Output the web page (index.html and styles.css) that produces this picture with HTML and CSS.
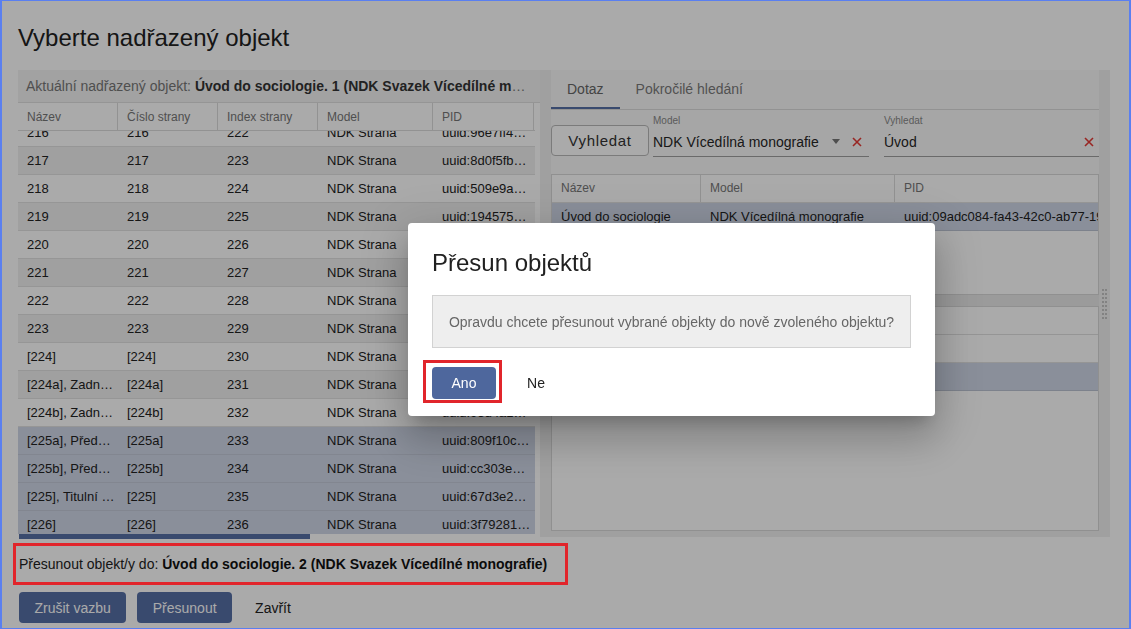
FILE: index.html
```html
<!DOCTYPE html>
<html lang="cs">
<head>
<meta charset="utf-8">
<title>Vyberte nadřazený objekt</title>
<link rel="stylesheet" href="styles.css">
</head>
<body>
<div class="page">
  <h1 class="title">Vyberte nadřazený objekt</h1>
  <div class="panels">
    <section class="left">
      <div class="current">Aktuální nadřazený objekt: <b>Úvod do sociologie. 1 (NDK Svazek Vícedílné monografie)</b></div>
      <div class="grid-wrap">
        <div class="grid-head">
          <div class="hc">Název</div><div class="hc">Číslo strany</div><div class="hc">Index strany</div><div class="hc">Model</div><div class="hc">PID</div><div class="hc">Typ</div>
        </div>
        <div class="grid-body">
          <div class="grid-rows">
            <div class="row"><div class="c">216</div><div class="c">216</div><div class="c">222</div><div class="c">NDK Strana</div><div class="c">uuid:96e7ff4a21</div><div class="c"></div></div>
            <div class="row"><div class="c">217</div><div class="c">217</div><div class="c">223</div><div class="c">NDK Strana</div><div class="c">uuid:8d0f5fb3a1</div><div class="c"></div></div>
            <div class="row"><div class="c">218</div><div class="c">218</div><div class="c">224</div><div class="c">NDK Strana</div><div class="c">uuid:509e9a7c21</div><div class="c"></div></div>
            <div class="row"><div class="c">219</div><div class="c">219</div><div class="c">225</div><div class="c">NDK Strana</div><div class="c">uuid:1945751c2d</div><div class="c"></div></div>
            <div class="row"><div class="c">220</div><div class="c">220</div><div class="c">226</div><div class="c">NDK Strana</div><div class="c">uuid:2a7f10bc4e</div><div class="c"></div></div>
            <div class="row"><div class="c">221</div><div class="c">221</div><div class="c">227</div><div class="c">NDK Strana</div><div class="c">uuid:4c1e92ad7f</div><div class="c"></div></div>
            <div class="row"><div class="c">222</div><div class="c">222</div><div class="c">228</div><div class="c">NDK Strana</div><div class="c">uuid:77b3d0e512</div><div class="c"></div></div>
            <div class="row"><div class="c">223</div><div class="c">223</div><div class="c">229</div><div class="c">NDK Strana</div><div class="c">uuid:e03a5f6b88</div><div class="c"></div></div>
            <div class="row"><div class="c">[224]</div><div class="c">[224]</div><div class="c">230</div><div class="c">NDK Strana</div><div class="c">uuid:b51c7e0d43</div><div class="c"></div></div>
            <div class="row"><div class="c">[224a], Zadní předsádka</div><div class="c">[224a]</div><div class="c">231</div><div class="c">NDK Strana</div><div class="c">uuid:0f9e3c2a61</div><div class="c"></div></div>
            <div class="row"><div class="c">[224b], Zadní předsádka</div><div class="c">[224b]</div><div class="c">232</div><div class="c">NDK Strana</div><div class="c">uuid:93d4a1b7e5</div><div class="c"></div></div>
            <div class="row sel"><div class="c">[225a], Přední desky</div><div class="c">[225a]</div><div class="c">233</div><div class="c">NDK Strana</div><div class="c">uuid:809f10c2ab</div><div class="c"></div></div>
            <div class="row sel"><div class="c">[225b], Přední desky</div><div class="c">[225b]</div><div class="c">234</div><div class="c">NDK Strana</div><div class="c">uuid:cc303e91fa</div><div class="c"></div></div>
            <div class="row sel"><div class="c">[225], Titulní strana</div><div class="c">[225]</div><div class="c">235</div><div class="c">NDK Strana</div><div class="c">uuid:67d3e2a4b0</div><div class="c"></div></div>
            <div class="row sel"><div class="c">[226]</div><div class="c">[226]</div><div class="c">236</div><div class="c">NDK Strana</div><div class="c">uuid:3f79281d6c</div><div class="c"></div></div>
          </div>
        </div>
        <div class="hscroll"><div class="thumb"></div></div>
      </div>
      <div class="vtrack"></div>
    </section>

    <section class="right">
      <div class="inner">
        <div class="tabs">
          <div class="tab active">Dotaz</div>
          <div class="tab">Pokročilé hledání</div>
        </div>
        <div class="search">
          <button class="btn-stroked">Vyhledat</button>
          <div class="field model">
            <label>Model</label>
            <div class="control">
              <span class="value">NDK Vícedílná monografie</span>
              <span class="arrow"></span>
              <svg class="clear" width="10" height="10" viewBox="0 0 10 10"><path d="M1 1L9 9M9 1L1 9" stroke="#e53935" stroke-width="1.6"/></svg>
            </div>
          </div>
          <div class="field query">
            <label>Vyhledat</label>
            <div class="control">
              <span class="value">Úvod</span>
              <svg class="clear" width="10" height="10" viewBox="0 0 10 10"><path d="M1 1L9 9M9 1L1 9" stroke="#e53935" stroke-width="1.6"/></svg>
            </div>
          </div>
        </div>
        <div class="pane top">
          <div class="rt-row rt-head"><div class="hc">Název</div><div class="hc">Model</div><div class="hc">PID</div></div>
          <div class="rt-row sel"><div class="c">Úvod do sociologie</div><div class="c">NDK Vícedílná monografie</div><div class="c clip">uuid:09adc084-fa43-42c0-ab77-19f2c3d4e5a6</div></div>
        </div>
        <div class="splitter"><svg class="grip" width="6" height="30" viewBox="0 0 6 30">
          <g fill="#c4c4c4">
            <rect x="0" y="0" width="2" height="2"/><rect x="3" y="0" width="2" height="2"/>
            <rect x="0" y="4" width="2" height="2"/><rect x="3" y="4" width="2" height="2"/>
            <rect x="0" y="8" width="2" height="2"/><rect x="3" y="8" width="2" height="2"/>
            <rect x="0" y="12" width="2" height="2"/><rect x="3" y="12" width="2" height="2"/>
            <rect x="0" y="16" width="2" height="2"/><rect x="3" y="16" width="2" height="2"/>
            <rect x="0" y="20" width="2" height="2"/><rect x="3" y="20" width="2" height="2"/>
            <rect x="0" y="24" width="2" height="2"/><rect x="3" y="24" width="2" height="2"/>
            <rect x="0" y="28" width="2" height="2"/><rect x="3" y="28" width="2" height="2"/>
          </g></svg></div>
        <div class="pane bottom">
          <div class="rt-row rt-head"><div class="hc">Název</div><div class="hc">Model</div><div class="hc"></div></div>
          <div class="rt-row"><div class="c">Úvod do sociologie. 1</div><div class="c">NDK Svazek</div><div class="c"></div></div>
          <div class="rt-row sel"><div class="c">Úvod do sociologie. 2</div><div class="c">NDK Svazek</div><div class="c"></div></div>
        </div>
      </div>
    </section>
  </div>

  <div class="move-target">Přesunout objekt/y do:&nbsp;<b>Úvod do sociologie. 2 (NDK Svazek Vícedílné monografie)</b></div>

  <div class="actions">
    <button class="btn-flat">Zrušit vazbu</button>
    <button class="btn-flat">Přesunout</button>
    <button class="btn-text">Zavřít</button>
  </div>
</div>

<div class="backdrop"></div>

<div class="dialog">
  <h2 class="dlg-title">Přesun objektů</h2>
  <div class="dlg-msg">Opravdu chcete přesunout vybrané objekty do nově zvoleného objektu?</div>
  <div class="dlg-actions">
    <button class="dlg-yes">Ano</button>
    <button class="dlg-no">Ne</button>
  </div>
</div>

<div class="frame"></div>
</body>
</html>
```

FILE: styles.css
```css
*, *::before, *::after { box-sizing: border-box; }
html, body { margin: 0; padding: 0; }
body {
  font-family: "Liberation Sans", Arial, sans-serif;
  background: #ffffff;
  color: #212121;
  width: 1131px;
  height: 629px;
  overflow: hidden;
}
button { font-family: inherit; cursor: pointer; }

.page { padding: 22px 21px 0 18px; }

.title {
  margin: 0 0 16px;
  font-size: 24px;
  line-height: 32px;
  font-weight: normal;
  color: #212121;
}

.panels { display: flex; height: 469px; align-items: flex-start; }

/* ---------- left panel ---------- */
.left {
  width: 522px;
  height: 469px;
  display: grid;
  grid-template-columns: 517px 5px;
  grid-template-rows: 33px 1fr;
  background: #f1f1f1;
}
.current {
  grid-column: 1 / 3;
  padding: 0 7px 0 8px;
  font-size: 14px;
  line-height: 33px;
  color: #777;
  white-space: nowrap;
  overflow: hidden;
  text-overflow: ellipsis;
  background: #f3f3f3;
  border-bottom: 1px solid #e0e0e0;
}
.current b { color: #333; }
.grid-wrap { display: flex; flex-direction: column; min-height: 0; overflow: hidden; background: #fff; }
.vtrack { background: #ffffff; }

.grid-head, .row {
  display: grid;
  grid-template-columns: 100px 100px 100px 115px 101px 400px;
  width: 916px;
}
.grid-head { height: 28px; flex: none; border-bottom: 1px solid #dcdcdc; background: #fff; }
.hc {
  font-size: 12px;
  color: #777;
  line-height: 28px;
  padding: 0 9px;
  border-right: 1px solid #dcdcdc;
  white-space: nowrap;
  overflow: hidden;
}
.grid-body { flex: 1; overflow: hidden; min-height: 0; }
.grid-rows { margin-top: -12px; }
.row { height: 28px; border-bottom: 1px solid #e2e2e2; background: #fff; }
.row:nth-child(even) { background: #f1f1f1; }
.row.sel { background: #d0d7e8; border-bottom-color: #c3cad9; }
.c {
  font-size: 13px;
  color: #222;
  line-height: 27px;
  padding: 0 2px 0 9px;
  white-space: nowrap;
  overflow: hidden;
  text-overflow: ellipsis;
}
.hscroll { height: 5px; flex: none; background: #fff; padding-left: 1px; }
.thumb { width: 291px; height: 5px; background: #566fa6; }

/* ---------- right panel ---------- */
.right {
  width: 570px;
  height: 467px;
  padding: 0 11px 6px;
  background: #f0f0f0;
  display: flex;
}
.inner { flex: 1; display: flex; flex-direction: column; background: #fafafa; min-width: 0; }
.tabs { height: 40px; flex: none; display: flex; border-bottom: 1px solid #dcdcdc; }
.tab {
  padding: 0 16px;
  font-size: 14px;
  line-height: 38px;
  color: #7a7a7a;
  border-bottom: 2px solid transparent;
}
.tab.active { color: #666; border-bottom-color: #566fa6; }

.search { height: 64px; flex: none; display: flex; align-items: flex-start; }
.btn-stroked {
  margin-top: 15px;
  width: 98px;
  height: 31px;
  padding: 0;
  font-size: 15px;
  letter-spacing: 0.7px;
  color: #333;
  background: #fff;
  border: 1px solid #b9b9b9;
  border-radius: 4px;
}
.field { display: flex; flex-direction: column; margin-top: 5px; }
.field label { font-size: 10px; line-height: 12px; color: #888; }
.field .control {
  height: 30px;
  display: flex;
  align-items: center;
  border-bottom: 1px solid #a0a0a0;
  font-size: 14px;
  color: #262626;
}
.field .value { flex: 1; white-space: nowrap; }
.model { width: 216px; margin-left: 4px; }
.query { flex: 1; margin-left: 15px; }
.arrow {
  width: 0; height: 0;
  border-left: 4px solid transparent;
  border-right: 4px solid transparent;
  border-top: 5px solid #757575;
  margin-right: 12px;
}
.clear { margin-right: 7px; }
.query .clear { margin-right: 5px; }

.pane { border: 1px solid #d8d8d8; background: #fff; overflow: hidden; }
.pane.top { height: 121px; flex: none; }
.pane.bottom { flex: 1; }
.rt-row {
  display: grid;
  grid-template-columns: 149px 194px 400px;
  height: 28px;
  border-bottom: 1px solid #e0e0e0;
  width: 743px;
}
.rt-row .c { padding: 0 9px; line-height: 27px; }
.rt-row .hc { padding: 0 9px; line-height: 27px; }
.rt-row .hc:last-child { border-right: none; }
.rt-row.sel { background: #d0d7e8; border-bottom-color: #bcc3d3; }
.c.clip { text-overflow: clip; }

.splitter { height: 11px; flex: none; background: #e9e9e9; position: relative; }
.grip { position: absolute; right: -9px; top: -6px; }

/* ---------- bottom ---------- */
.move-target {
  position: relative;
  margin-top: 4px;
  margin-left: -5px;
  width: 555px;
  height: 42px;
  padding: 0 6px;
  display: flex;
  align-items: center;
  font-size: 14px;
  color: #222;
  white-space: nowrap;
}
.move-target b { color: #111; }
.move-target::after {
  content: "";
  position: absolute;
  inset: 0;
  border: 3px solid #e1252b;
  z-index: 30;
}
.actions { margin-top: 7px; margin-left: 1px; display: flex; align-items: center; }
.btn-flat {
  height: 31px;
  padding: 0 15.5px;
  margin-right: 11px;
  font-size: 14px;
  color: #fff;
  background: #566fa6;
  border: none;
  border-radius: 4px;
}
.btn-flat + .btn-flat { margin-right: 8px; }
.btn-text {
  height: 31px;
  padding: 0 15px;
  font-size: 14px;
  color: #222;
  background: transparent;
  border: none;
}

/* ---------- overlay & dialog ---------- */
.backdrop {
  position: fixed;
  inset: 0;
  background: rgba(0, 0, 0, 0.333);
  z-index: 10;
}
.dialog {
  position: absolute;
  left: 408px;
  top: 223px;
  width: 527px;
  padding: 24px 24px 17px;
  background: #fff;
  border-radius: 4px;
  z-index: 20;
  box-shadow: 0 11px 15px -7px rgba(0,0,0,.2), 0 24px 38px 3px rgba(0,0,0,.14), 0 9px 46px 8px rgba(0,0,0,.12);
}
.dlg-title {
  margin: 0 0 16px;
  font-size: 24px;
  line-height: 32px;
  font-weight: normal;
  color: #212121;
}
.dlg-msg {
  height: 53px;
  display: flex;
  align-items: center;
  justify-content: center;
  background: #eeeeee;
  border: 1px solid #d2d2d2;
  font-size: 14px;
  color: #666;
}
.dlg-actions { margin-top: 19px; display: flex; align-items: center; }
.dlg-yes {
  position: relative;
  height: 32px;
  min-width: 64px;
  padding: 0 16px;
  font-size: 14px;
  color: #fff;
  background: #4e679d;
  border: none;
  border-radius: 4px;
}
.dlg-yes::after {
  content: "";
  position: absolute;
  left: -9px;
  top: -7px;
  width: 79px;
  height: 43px;
  border: 3px solid #e1252b;
}
.dlg-no {
  margin-left: 8px;
  height: 32px;
  min-width: 64px;
  padding: 0 16px;
  font-size: 14px;
  color: #222;
  background: transparent;
  border: none;
}

.frame {
  position: fixed;
  inset: 0;
  border: 1px solid #5a7ff0;
  border-left-width: 2px;
  border-right-width: 2px;
  pointer-events: none;
  z-index: 40;
}
```
